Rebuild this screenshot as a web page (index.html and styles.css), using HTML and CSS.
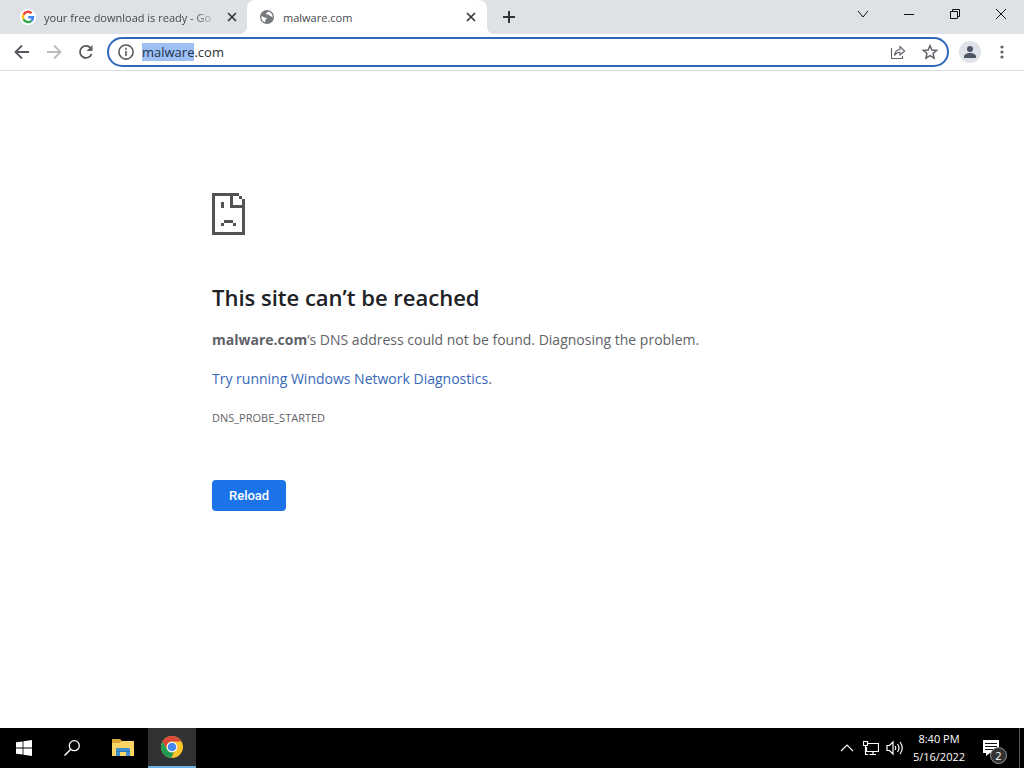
FILE: index.html
```html
<!DOCTYPE html>
<html lang="en">
<head>
<meta charset="utf-8">
<title>malware.com</title>
<link rel="stylesheet" href="styles.css">
</head>
<body>
<header class="browser">
  <div class="tabstrip">
    <div class="tab">
      <svg class="favicon" viewBox="0 0 16 16"><circle cx="8" cy="8" r="8" fill="#fff"/><g fill="none" stroke-width="2.4"><path d="M11.6 4.2A5.1 5.1 0 0 0 3.5 5.6" stroke="#ea4335"/><path d="M3.5 5.6a5.2 5.2 0 0 0 0 4.8" stroke="#fbbc05"/><path d="M3.5 10.4a5.1 5.1 0 0 0 7.9 1.4" stroke="#34a853"/><path d="M11.4 11.8A5 5 0 0 0 13 8.2H8.2" stroke="#4285f4"/></g></svg>
      <span class="tab-title faded">your free download is ready - Go</span>
      <button class="tab-close" aria-label="Close tab"><svg viewBox="0 0 16 16"><path d="M4 4l8 8M12 4l-8 8"/></svg></button>
    </div>
    <div class="tab active">
      <svg class="favicon" viewBox="0 0 16 16"><circle cx="8" cy="8" r="7" fill="#767a7e"/><path d="M2.4 7.2c2 .3 2.4 1.6 4.4 1.5 1.4 0 1.3 1.3 0 1.8-.8.4-.1 1.6-.9 2.8A6 6 0 0 1 2.4 7.2zM9.2 2.5c-.1 1.2-1.8.7-2.1 2-.2 1 1 1.1 2.2 1 1.1-.1.9 1.4 2.1 1.6 1 .2 1.3 1.1 2.2 1.5A6 6 0 0 0 9.2 2.5z" fill="#fff"/></svg>
      <span class="tab-title">malware.com</span>
      <button class="tab-close" aria-label="Close tab"><svg viewBox="0 0 16 16"><path d="M4 4l8 8M12 4l-8 8"/></svg></button>
    </div>
    <button class="new-tab" aria-label="New tab"><svg viewBox="0 0 16 16"><path d="M8 2v12M2 8h12"/></svg></button>
    <div class="window-controls">
      <button aria-label="Search tabs"><svg viewBox="0 0 12 12"><path d="M1 3l5 6 5-6"/></svg></button>
      <button aria-label="Minimize"><svg viewBox="0 0 12 12"><path d="M1 6.500h10"/></svg></button>
      <button aria-label="Restore"><svg viewBox="0 0 12 12"><path d="M1.500 3.500h7v7h-7zM3.500 3.500v-2h7v7h-2"/></svg></button>
      <button aria-label="Close"><svg viewBox="0 0 12 12"><path d="M1 1l10 10M11 1L1 11"/></svg></button>
    </div>
  </div>
  <div class="toolbar">
    <button class="nav" aria-label="Back"><svg viewBox="0 0 16 16"><path d="M15 8H2M8 1.500L1.500 8 8 14.500"/></svg></button>
    <button class="nav disabled" aria-label="Forward" disabled><svg viewBox="0 0 16 16"><path d="M1 8h13M8 1.500L14.500 8 8 14.500"/></svg></button>
    <button class="nav" aria-label="Reload page"><svg viewBox="0 0 16 16"><path d="M13.600 10A6 6 0 1 1 12.300 3.700L14 5.500"/><path d="M14.500 1v6h-6z" fill="#5f6368" stroke="none"/></svg></button>
    <div class="omnibox">
      <svg class="info" viewBox="0 0 16 16"><circle cx="8" cy="8" r="6.300"/><path d="M8 7v4.500M8 4.300v1.600"/></svg>
      <input class="url" id="url" type="text" value="malware.com" aria-label="Address bar" spellcheck="false">
      <button class="action share" aria-label="Share this page"><svg viewBox="0 0 16 16"><path d="M1.500 4v10.500h11V12M4.500 11.500C5 7.500 7 5.600 10 5.500v-3L14.700 7 10 11V8.300C7.500 8.300 6 9 4.500 11.500z"/></svg></button>
      <button class="action" aria-label="Bookmark this tab"><svg viewBox="0 0 16 16"><path d="M8 1.700l1.900 4.300 4.700.4L11 9.500l1.100 4.600L8 11.700l-4.100 2.400L5 9.500 1.400 6.400l4.700-.4z"/></svg></button>
    </div>
    <button class="profile" aria-label="Profile"><svg viewBox="0 0 22 22"><circle cx="11" cy="11" r="11" fill="#dfe2e8"/><circle cx="11" cy="8" r="3" fill="#4d5566"/><path d="M5 17v-1.500C5 13.200 8 12 11 12s6 1.200 6 3.500V17z" fill="#4d5566"/></svg></button>
    <button class="more" aria-label="Menu"><svg viewBox="0 0 16 16"><g fill="#5f6368"><circle cx="8" cy="3" r="1.600"/><circle cx="8" cy="8" r="1.600"/><circle cx="8" cy="13" r="1.600"/></g></svg></button>
  </div>
</header>

<main class="page">
  <div class="error">
    <svg class="sad" viewBox="0 0 11 14" shape-rendering="crispEdges" aria-hidden="true"><path fill="#535353" d="M0 0h9v1H7v3h4v1H6V1H1v12h9V5h1v9H0zM9 1h1v1h1v3h-1V2H9zM3 3h1v2H3zM4 9h3v1H4zM3 10h1v1H3zM7 10h1v1H7z"/></svg>
    <h1>This site can’t be reached</h1>
    <p class="summary"><strong>malware.com</strong>’s DNS address could not be found. Diagnosing the problem.</p>
    <p class="suggestion"><a href="#diagnostics">Try running Windows Network Diagnostics</a>.</p>
    <p class="code">DNS_PROBE_STARTED</p>
    <button class="reload">Reload</button>
  </div>
</main>

<footer class="taskbar">
  <button class="task" aria-label="Start"><svg viewBox="0 0 16 16"><path fill="#fff" d="M0 2.300L6.600 1.400v6.200H0zM7.400 1.300L16 0v7.600H7.400zM0 8.400h6.600v6.200L0 13.700zM7.400 8.400H16V16l-8.600-1.300z"/></svg></button>
  <button class="task" aria-label="Search"><svg viewBox="0 0 16 16"><path d="M6.500 9.500L.5 15.500" fill="none" stroke="#fff" stroke-width="1.500"/><circle cx="10.300" cy="5.700" r="5" fill="none" stroke="#fff" stroke-width="1.300"/></svg></button>
  <button class="task wide" aria-label="File Explorer"><svg viewBox="0 0 22 20"><path fill="#dca733" d="M0 1h8l2 2h11v4H0z"/><path fill="#fbd667" d="M0 5h8l2-2h12v15H0z"/><path fill="#3f91d0" d="M4 18v-7q0-1 1-1h12q1 0 1 1v7h-4v-4H8v4z"/><path fill="#2878b8" d="M4 13h14v1H4z"/></svg></button>
  <button class="task current" aria-label="Google Chrome"><svg viewBox="0 0 24 24"><circle cx="12" cy="12" r="11" fill="#fbc52d"/><path fill="#da4937" d="M2.500 6.500A11 11 0 0 1 21.500 6.500H12A5.500 5.500 0 0 0 7.200 14.700z"/><path fill="#209b58" d="M2.500 6.500L7.200 14.700A5.500 5.500 0 0 0 14 17.100L11.300 23A11 11 0 0 1 2.500 6.500z"/><circle cx="12" cy="12" r="5.300" fill="#fff"/><circle cx="12" cy="12" r="4.300" fill="#4688ed"/></svg></button>
  <div class="tray">
    <button class="tray-icon" aria-label="Show hidden icons"><svg viewBox="0 0 16 16"><path d="M2 11l6-6 6 6"/></svg></button>
    <button class="tray-icon" aria-label="Network"><svg viewBox="0 0 16 16"><path d="M5 3.500h10.500v8H3.500V7M10 11.500v3M6.500 14.500H13M.5 1.500h4v4h-4zM2.500 5.500v9H5"/></svg></button>
    <button class="tray-icon sound" aria-label="Volume"><svg viewBox="0 0 18 16"><path d="M1 5.500h2.500L7 2v12l-3.500-3.500H1zM9 6q1.500 2 0 4M11.500 4q3 4 0 8M14 2q4.500 6 0 12"/></svg></button>
    <div class="clock"><time>8:40 PM</time><time>5/16/2022</time></div>
    <button class="notes" aria-label="Notifications"><svg viewBox="0 0 18 18"><path fill="#fff" d="M1 1h16v13H8l-4 3v-3H1z"/><path d="M3 4.500h12M3 7.500h12M3 10.500h8" stroke="#111" stroke-width="1"/></svg><span class="badge">2</span></button>
    <span class="desktop"></span>
  </div>
</footer>
<script src="app.js"></script>
</body>
</html>
```

FILE: styles.css
```css
* { box-sizing: border-box; }
body {
  margin: 0;
  min-height: 100vh;
  display: flex;
  flex-direction: column;
  background: #fff;
  font-family: "Open Sans", "Noto Sans", sans-serif;
}
button {
  border: 0;
  padding: 0;
  background: none;
  color: inherit;
  font: inherit;
  display: flex;
  align-items: center;
  justify-content: center;
  flex: none;
}
svg { display: block; flex: none; }

.tabstrip {
  display: flex;
  height: 34px;
  background: #dee1e6;
}
.tab {
  position: relative;
  display: flex;
  align-items: center;
  flex: 0 1 240px;
  min-width: 0;
  padding: 0 8px 0 12px;
  font-size: 11px;
  color: #45494d;
}
.tab:first-child { margin-left: 8px; padding-right: 7px; flex-basis: 239px; }
.tab.active {
  background: #fff;
  border-radius: 8px 8px 0 0;
}
.tab.active::before,
.tab.active::after {
  content: "";
  position: absolute;
  bottom: 0;
  width: 8px;
  height: 8px;
}
.tab.active::before {
  right: 100%;
  background: radial-gradient(circle at 0 0, #dee1e6 8px, #fff 8px);
}
.tab.active::after {
  left: 100%;
  background: radial-gradient(circle at 100% 0, #dee1e6 8px, #fff 8px);
}
.favicon { width: 16px; height: 16px; }
.tab-title {
  flex: 1;
  min-width: 0;
  margin: 0 6px 0 8px;
  overflow: hidden;
  white-space: nowrap;
}
.faded {
  -webkit-mask-image: linear-gradient(to left, transparent, #000 24px);
  mask-image: linear-gradient(to left, transparent, #000 24px);
}
.tab-close svg { width: 16px; height: 16px; stroke: #35383b; stroke-width: 1.7; }
.new-tab { width: 28px; margin-left: 8px; }
.new-tab svg { width: 16px; height: 16px; stroke: #303336; stroke-width: 2; }
.window-controls { display: flex; margin-left: auto; }
.window-controls button { width: 46px; height: 28px; }
.window-controls svg { width: 12px; height: 12px; fill: none; stroke: #111; stroke-width: 1; }

.toolbar {
  display: flex;
  align-items: center;
  height: 37px;
  padding: 0 10px 0 6px;
  border-bottom: 1px solid #dcdedd;
}
.nav { width: 32px; height: 32px; }
.nav svg { width: 16px; height: 16px; fill: none; stroke: #55595d; stroke-width: 1.8; }
.nav.disabled svg { stroke: #b9bbbe; }
.omnibox {
  display: flex;
  align-items: center;
  flex: 1;
  min-width: 0;
  height: 30px;
  margin: 0 10px 0 5px;
  padding: 0 1px 0 8px;
  border: 2px solid #2f67b8;
  border-radius: 15px;
}
.info { width: 18px; height: 18px; fill: none; stroke: #55595d; stroke-width: 1.4; }
.url {
  flex: 1;
  min-width: 0;
  height: 24px;
  margin-left: 7px;
  padding: 0;
  border: 0;
  outline: 0;
  background: none;
  font: 13px/22px "Open Sans", "Noto Sans", sans-serif;
  color: #303336;
}
.url::selection { background: #9dc1f5; color: #1f3050; }
.action { width: 32px; height: 24px; }
.action svg { width: 16px; height: 16px; fill: none; stroke: #5f6368; stroke-width: 1.5; }
.share svg { stroke-width: 1.1; }
.profile svg { width: 22px; height: 22px; }
.more { width: 24px; height: 28px; margin-left: 9px; }
.more svg { width: 16px; height: 16px; }

.page { flex: 1; padding: 122px 24px 24px; }
.error { max-width: 600px; margin: 0 auto; color: #5f6368; font-size: 14px; line-height: 22px; }
.sad { width: 33px; height: 42px; }
h1 {
  margin: 46px 0 0;
  font-size: 22px;
  font-weight: 600;
  line-height: 32px;
  color: #202124;
}
p { margin: 0; }
.summary { margin-top: 16px; }
.suggestion { margin-top: 17px; }
.suggestion a { color: #3667b8; text-decoration: none; }
.code { margin-top: 17px; font-size: 11px; }
.reload {
  margin-top: 51px;
  padding: 0 17px;
  height: 31px;
  border-radius: 4px;
  background: #1a73e8;
  color: #fff;
  font: 500 13px Roboto, sans-serif;
}

.taskbar { display: flex; height: 40px; background: #000; color: #fff; }
.task { width: 48px; height: 40px; }
.task svg { width: 16px; height: 16px; }
.task.wide { width: 52px; padding-left: 2px; }
.task.wide svg { width: 22px; height: 20px; }
.task.current { background: #303234; border-bottom: 2px solid #6ab0e0; }
.task.current svg { width: 24px; height: 24px; }
.tray { display: flex; align-items: center; margin-left: auto; }
.tray-icon { width: 24px; height: 40px; }
.tray-icon svg { width: 16px; height: 16px; fill: none; stroke: #fff; stroke-width: 1.2; }
.sound svg { width: 18px; }
.clock {
  display: flex;
  flex-direction: column;
  align-items: center;
  width: 64px;
  font-size: 11px;
  line-height: 18px;
}
.notes { position: relative; width: 40px; height: 40px; }
.notes svg { width: 18px; height: 18px; }
.badge {
  position: absolute;
  left: 19px;
  top: 19px;
  width: 17px;
  height: 17px;
  border: 1px solid #999;
  border-radius: 50%;
  background: #333;
  color: #fff;
  font-size: 11px;
  line-height: 15px;
  text-align: center;
}
.desktop { width: 5px; height: 40px; margin-left: 8px; border-left: 1px solid #555; }
```

FILE: app.js
```js
const url = document.getElementById("url");
url.focus();
url.setSelectionRange(0, url.value.indexOf("."));
```
